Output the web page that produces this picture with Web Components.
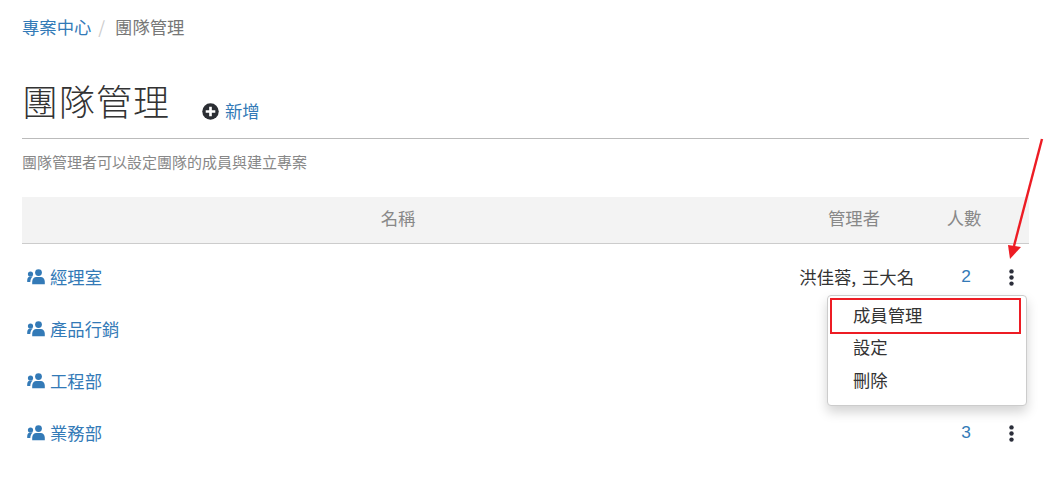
<!DOCTYPE html>
<html lang="zh-Hant">
<head>
<meta charset="utf-8">
<title>團隊管理</title>
<style>
  html, body { margin: 0; background: #fff; }
  body { font-family: "Noto Sans CJK TC", "Liberation Sans", sans-serif; }
</style>
</head>
<body>
<team-page></team-page>

<template id="crumbs-tpl">
  <style>
    :host { display: flex; align-items: center; height: 20px; font-size: 17.33px; line-height: 20px; color: #777; position: relative; top: -1px; }
    a { color: #337ab7; text-decoration: none; }
    .sep { color: #ccc; margin: 0 10px 0 7px; }
  </style>
  <a href="#">專案中心</a><span class="sep">/</span><span>團隊管理</span>
</template>

<template id="heading-tpl">
  <style>
    :host { display: block; }
    .head { display: flex; align-items: flex-end; height: 60px; border-bottom: 1px solid #bbb; }
    h1 { margin: 0 32px 0 0; font-size: 36px; font-weight: 300; line-height: 60px; height: 60px; color: #333; letter-spacing: 1px; position: relative; top: -8px; }
    a { display: flex; align-items: center; gap: 6px; margin-bottom: 15px; color: #337ab7; font-size: 17.33px; line-height: 24px; text-decoration: none; }
    svg { width: 17px; height: 17px; display: block; }
    p { margin: 14px 0 0; font-size: 15px; line-height: 18px; color: #888; }
  </style>
  <div class="head">
    <h1><slot name="title"></slot></h1>
    <a href="#">
      <svg viewBox="0 0 512 512"><circle cx="256" cy="256" r="248" fill="#2b2e33"/><path fill="#fff" d="M216 112h80v104h104v80H296v104h-80V296H112v-80h104z"/></svg>
      <span>新增</span>
    </a>
  </div>
  <p><slot></slot></p>
</template>

<template id="row-tpl">
  <style>
    :host { display: grid; grid-template-columns: 1fr 160px 60px 35px; align-items: center; height: 52px; font-size: 17.33px; color: #333; }
    .name { display: flex; align-items: center; gap: 5px; padding-left: 5px; }
    a { color: #337ab7; text-decoration: none; margin-bottom: 2px; }
    .name svg { width: 18px; height: 16px; fill: #337ab7; display: block; }
    .admins { text-align: right; white-space: nowrap; padding-right: 20px; word-spacing: 2px; margin-bottom: 2px; }
    .count { text-align: center; color: #337ab7; font-family: "Liberation Sans", sans-serif; padding-left: 4px; margin-bottom: 2px; }
    .more { display: flex; justify-content: center; }
    .more svg { width: 5px; height: 17px; display: block; }
    :host([hide-meta]) .more { visibility: hidden; }
  </style>
  <div class="name">
    <svg viewBox="0 0 18 16"><circle cx="11.500" cy="3.600" r="3.400"/><path d="M5.200 15.300v-2.500c0-3 2-4.800 4-4.800h4.600c2 0 4 1.800 4 4.800v2.500z"/><circle cx="3.500" cy="5" r="2.600"/><path d="M.2 13v-1.800c0-2.200 1.300-3.700 3-3.700h2.500c-1.400 1.300-2.300 3-2.400 5.500z"/></svg>
    <a href="#"><slot name="name"></slot></a>
  </div>
  <div class="admins"><slot name="admins"></slot></div>
  <div class="count"><slot name="count"></slot></div>
  <div class="more">
    <svg viewBox="0 0 5 17" fill="#2b2e3a"><circle cx="2.500" cy="2.400" r="2.200"/><circle cx="2.500" cy="8.500" r="2.200"/><circle cx="2.500" cy="14.600" r="2.200"/></svg>
  </div>
</template>

<template id="menu-tpl">
  <style>
    :host { position: absolute; left: 827px; top: 295px; width: 200px; box-sizing: border-box; padding: 3px 2px 9px; background: #fff; border: 1px solid #ccc; border-radius: 4px; box-shadow: 0 6px 12px rgba(0,0,0,.175); font-size: 17.33px; color: #333; }
    div { height: 33px; line-height: 33px; padding-left: 23px; }
    .marked { height: 36px; box-sizing: border-box; line-height: 29px; padding-left: 21px; margin: -1px 3px -4px 0; border: 2px solid #ed1c24; }
  </style>
  <div class="marked">成員管理</div>
  <div>設定</div>
  <div>刪除</div>
</template>

<template id="page-tpl">
  <style>
    :host { display: block; position: relative; width: 1053px; height: 492px; box-sizing: border-box; padding: 18px 24px 0 22px; overflow: hidden; }
    team-heading { margin-top: 40px; }
    .table { margin-top: 26px; }
    .thead { display: grid; grid-template-columns: 1fr 160px 60px 35px; align-items: center; box-sizing: border-box; height: 47px; padding-bottom: 5px; background: #f3f3f3; border-bottom: 1px solid #ccc; font-size: 17.33px; color: #888; }
    .thead span { text-align: center; }
    .rows { padding-top: 7px; }
    .arrow { position: absolute; left: 1000px; top: 135px; width: 50px; height: 130px; }
  </style>
  <team-crumbs></team-crumbs>
  <team-heading><span slot="title">團隊管理</span>團隊管理者可以設定團隊的成員與建立專案</team-heading>
  <div class="table">
    <div class="thead"><span>名稱</span><span>管理者</span><span>人數</span><span></span></div>
    <div class="rows">
      <team-row><span slot="name">經理室</span><span slot="admins">洪佳蓉, 王大名</span><span slot="count">2</span></team-row>
      <team-row hide-meta><span slot="name">產品行銷</span></team-row>
      <team-row hide-meta><span slot="name">工程部</span></team-row>
      <team-row><span slot="name">業務部</span><span slot="count">3</span></team-row>
    </div>
  </div>
  <team-menu></team-menu>
  <svg class="arrow" viewBox="0 0 50 130"><path d="M42 4 L14 111" stroke="#ed1c24" stroke-width="2.400" fill="none"/><path d="M10 124 L8 110 L21 112z" fill="#ed1c24"/></svg>
</template>

<script>
  /** Builds a custom element whose shadow root is cloned from a template. */
  function defineFromTemplate (tag, templateId) {
    customElements.define(tag, class extends HTMLElement {
      constructor () {
        super();
        const root = this.attachShadow({ mode: 'open' });
        root.appendChild(document.getElementById(templateId).content.cloneNode(true));
      }
    });
  }

  defineFromTemplate('team-crumbs', 'crumbs-tpl');
  defineFromTemplate('team-heading', 'heading-tpl');
  defineFromTemplate('team-row', 'row-tpl');
  defineFromTemplate('team-menu', 'menu-tpl');
  defineFromTemplate('team-page', 'page-tpl');
</script>
</body>
</html>
